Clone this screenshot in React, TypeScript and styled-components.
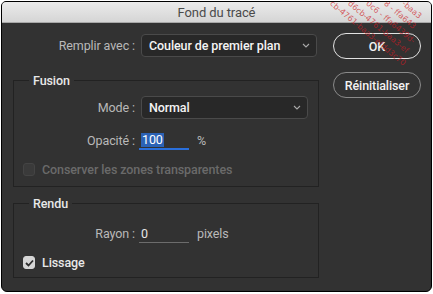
import styled, { createGlobalStyle } from "styled-components";

const GlobalStyle = createGlobalStyle`
  body {
    margin: 0;
    background: #ffffff;
    font-family: Roboto, "Liberation Sans", sans-serif;
    font-size: 12.5px;
    letter-spacing: -0.1px;
  }
`;

const Window = styled.div`
  position: relative;
  margin: 1px 0 0 1px;
  width: 431px;
  height: 291px;
  box-sizing: border-box;
  border: 1px solid #000;
  border-radius: 5px 5px 6px 6px;
  overflow: hidden;
  display: flex;
  flex-direction: column;
  background: #323232;
`;

const TitleBar = styled.div`
  flex: none;
  height: 20px;
  background: linear-gradient(#ebebeb, #d5d5d5);
  border-bottom: 1px solid #a8a8a8;
  display: flex;
  align-items: center;
  justify-content: center;
  font-size: 13px;
  color: #4b4b4b;
`;

const Body = styled.div`
  display: flex;
  gap: 14px;
  padding: 10px 0 0 11px;
`;

const Main = styled.div`
  width: 306px;
  padding-top: 1px;
  display: flex;
  flex-direction: column;
`;

const Side = styled.div`
  width: 88px;
  display: flex;
  flex-direction: column;
  gap: 13px;
`;

const Button = styled.button<{ $primary?: boolean }>`
  height: 26px;
  box-sizing: border-box;
  border-radius: 13px;
  border: 1px solid ${(p) => (p.$primary ? "#e2e2e2" : "#8a8a8a")};
  background: transparent;
  color: #f2f2f2;
  font-family: inherit;
  font-size: 12.5px;
  letter-spacing: -0.1px;
  font-weight: 500;
  padding: 0;
`;

const Row = styled.div<{ $label: number; $h: number; $mt?: number }>`
  display: grid;
  grid-template-columns: ${(p) => p.$label}px auto auto;
  justify-content: start;
  align-items: center;
  column-gap: 6px;
  height: ${(p) => p.$h}px;
  margin-top: ${(p) => p.$mt ?? 0}px;
`;

const Label = styled.span`
  text-align: right;
  color: #b9b9b9;
`;

const Select = styled.div<{ $w: number }>`
  width: ${(p) => p.$w}px;
  height: 23px;
  box-sizing: border-box;
  border: 1px solid #4a4a4a;
  border-radius: 4px;
  background: #282828;
  display: flex;
  align-items: center;
  justify-content: space-between;
  padding: 0 6px 0 7px;
  font-weight: 500;
  color: #f4f4f4;
`;

const Field = styled.div<{ $focus?: boolean }>`
  width: 50px;
  height: 19px;
  box-sizing: border-box;
  margin-left: -2px;
  padding-left: 2px;
  display: flex;
  align-items: center;
  border-bottom: ${(p) => (p.$focus ? "2px solid #2a6fdb" : "1px solid #6c6c6c")};
  color: #e6e6e6;
`;

const Selected = styled.span`
  background: #2b62b5;
  color: #ffffff;
  padding: 0 1px;
  line-height: 14px;
`;

const Unit = styled.span`
  margin-left: 2px;
  color: #b9b9b9;
`;

const Group = styled.div<{ $mt: number; $pt: number; $pb: number }>`
  position: relative;
  margin-top: ${(p) => p.$mt}px;
  border: 1px solid #222222;
  padding: ${(p) => p.$pt}px 0 ${(p) => p.$pb}px 0;
  display: flex;
  flex-direction: column;
`;

const Legend = styled.span`
  position: absolute;
  top: -8px;
  left: 15px;
  padding: 0 4px;
  background: #323232;
  line-height: 16px;
  font-weight: 500;
  color: #e8e8e8;
`;

const CheckRow = styled.label<{ $mt: number; $disabled?: boolean }>`
  display: flex;
  align-items: center;
  gap: 7px;
  height: 13px;
  margin-top: ${(p) => p.$mt}px;
  padding-left: 9px;
  font-weight: 500;
  color: ${(p) => (p.$disabled ? "#6a6a6a" : "#e8e8e8")};
`;

const Box = styled.span<{ $checked?: boolean }>`
  width: 12px;
  height: 13px;
  box-sizing: border-box;
  border-radius: 3px;
  display: flex;
  align-items: center;
  justify-content: center;
  background: ${(p) => (p.$checked ? "#d6d6d6" : "#3a3a3a")};
  border: 1px solid ${(p) => (p.$checked ? "#d6d6d6" : "#444444")};
`;

/* watermark stamped over the top-right corner of the capture */
const WatermarkLine = styled.div<{ $x: number; $y: number }>`
  position: absolute;
  left: ${(p) => p.$x}px;
  top: ${(p) => p.$y}px;
  transform: rotate(40deg);
  transform-origin: 0 0;
  font-family: "DejaVu Sans", sans-serif;
  font-size: 8px;
  line-height: 9px;
  letter-spacing: 0;
  color: rgba(205, 25, 35, 0.7);
  white-space: nowrap;
  pointer-events: none;
`;

const Chevron = () => (
  <svg width="8" height="5" viewBox="0 0 8 5">
    <polyline points="1,1 4,4 7,1" fill="none" stroke="#a8a8a8" strokeWidth="1.1" />
  </svg>
);

const Check = () => (
  <svg width="9" height="8" viewBox="0 0 9 8">
    <polyline points="1,4 3.5,6.5 8,1.5" fill="none" stroke="#2e2e2e" strokeWidth="1.8" />
  </svg>
);

const marks = [
  "-baa3",
  "8 - ffa643",
  "0c6 - ffa6439d-",
  "d6cb-4761-baa3-ef",
  "cb-4761-baa3-efdd3c70",
];

const App = () => (
  <>
    <GlobalStyle />
    <Window>
      <TitleBar>Fond du tracé</TitleBar>
      <Body>
        <Main>
          <Row $label={122} $h={23}>
            <Label>Remplir avec :</Label>
            <Select $w={176}>
              Couleur de premier plan
              <Chevron />
            </Select>
          </Row>

          <Group $mt={23} $pt={15} $pb={10}>
            <Legend>Fusion</Legend>
            <Row $label={121} $h={23}>
              <Label>Mode :</Label>
              <Select $w={167}>
                Normal
                <Chevron />
              </Select>
            </Row>
            <Row $label={121} $h={19} $mt={12}>
              <Label>Opacité :</Label>
              <Field $focus>
                <Selected>100</Selected>
              </Field>
              <Unit>%</Unit>
            </Row>
            <CheckRow $mt={13} $disabled>
              <Box />
              Conserver les zones transparentes
            </CheckRow>
          </Group>

          <Group $mt={16} $pt={20} $pb={8}>
            <Legend>Rendu</Legend>
            <Row $label={121} $h={19}>
              <Label>Rayon :</Label>
              <Field>0</Field>
              <Unit>pixels</Unit>
            </Row>
            <CheckRow $mt={13}>
              <Box $checked>
                <Check />
              </Box>
              Lissage
            </CheckRow>
          </Group>
        </Main>
        <Side>
          <Button $primary>OK</Button>
          <Button>Réinitialiser</Button>
        </Side>
      </Body>
      {marks.map((m, i) => (
        <WatermarkLine key={i} $x={404 - 18 * i} $y={-3}>
          {m}
        </WatermarkLine>
      ))}
    </Window>
  </>
);

export default App;
